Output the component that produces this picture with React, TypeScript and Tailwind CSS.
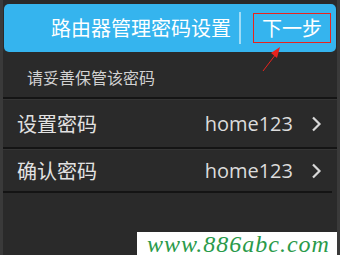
const cjk = { fontFamily: '"Noto Sans CJK SC", "Noto Sans", sans-serif' };

function Chevron() {
  return (
    <svg width="12" height="16" viewBox="0 0 12 16" className="text-[#d8d8d8]">
      <path d="M3 1.5 L9.5 8 L3 14.5" fill="none" stroke="currentColor" strokeWidth="2.2" />
    </svg>
  );
}

function Row({ label, value }: { label: string; value: string }) {
  return (
    <div className="flex h-full items-center pl-[14px] pr-[15px]">
      <span className="text-[20px] leading-none text-[#e2e2e2]">{label}</span>
      <span
        className="ml-auto text-[20px] leading-none text-[#dcdcdc]"
        style={{ fontFamily: '"Open Sans", "Noto Sans", sans-serif' }}
      >
        {value}
      </span>
      <span className="ml-[17px] flex items-center">
        <Chevron />
      </span>
    </div>
  );
}

export default function App() {
  return (
    <div
      className="relative h-[255px] w-[340px] overflow-hidden border-x-[3px] border-[#3a3a3a] bg-[#2a2a2a]"
      style={cjk}
    >
      <div className="px-[1px] pt-[4px]">
        <header className="flex h-[48px] items-center rounded-[5px] bg-[#35b4ee] pr-[5px]">
          <h1 className="ml-auto text-[20px] font-normal leading-none text-white">路由器管理密码设置</h1>
          <div className="ml-[8px] h-[32px] w-[2px] bg-[#9fdcf7]" />
          <div className="ml-[12px] flex h-[30px] w-[78px] items-center justify-center border-[1.5px] border-[#e8231d]">
            <span className="text-[20px] leading-none text-white">下一步</span>
          </div>
        </header>
      </div>

      <div className="flex h-[45px] items-center pl-[24px] pt-[4px]">
        <span className="text-[16px] leading-none text-[#d2d2d2]">请妥善保管该密码</span>
      </div>
      <div className="h-[2px] bg-[#141414]" />
      <div className="h-[48px] border-t border-[#353535]">
        <Row label="设置密码" value="home123" />
      </div>
      <div className="h-[2px] bg-[#141414]" />
      <div className="h-[42px] border-t border-[#353535]">
        <Row label="确认密码" value="home123" />
      </div>
      <div className="mr-[5px] h-[2px] bg-[#141414]" />

      <svg className="absolute left-[256px] top-[44px]" width="30" height="30" viewBox="0 0 30 30">
        <line x1="4" y1="27" x2="17" y2="10" stroke="#e8231d" strokeWidth="1" />
        <polygon points="21,3 12,9 18,14" fill="#e8231d" />
      </svg>

      <div className="absolute bottom-0 right-[-3px] flex h-[23px] w-[203px] items-center justify-center bg-white">
        <span
          className="text-[24px] font-light italic leading-none tracking-[1px] text-[#2a9a4a]"
          style={{ fontFamily: '"Liberation Serif", serif' }}
        >
          www.886abc.com
        </span>
      </div>
    </div>
  );
}
